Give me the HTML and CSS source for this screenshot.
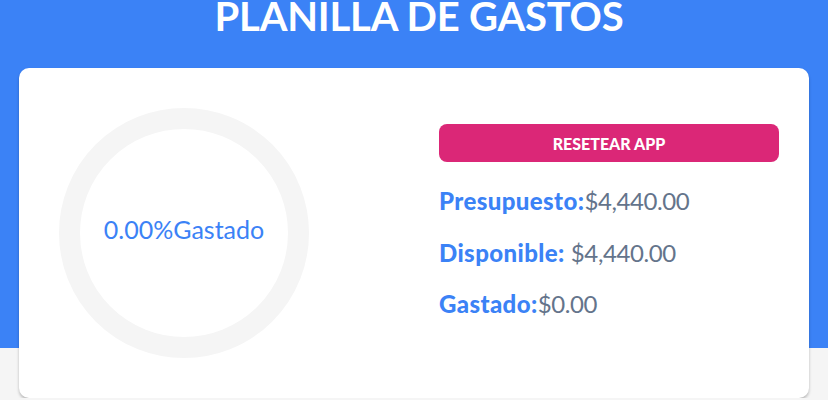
FILE: index.html
```html
<!DOCTYPE html>
<html lang="es">
<head>
<meta charset="utf-8">
<title>Planilla de gastos</title>
<link rel="stylesheet" href="styles.css">
</head>
<body>
<header class="header">
  <h1 class="title">Planilla de gastos</h1>
</header>
<main class="card">
  <div class="chart">
    <svg class="ring" viewBox="0 0 250 250" width="250" height="250">
      <circle cx="125" cy="125" r="114.5" fill="none" stroke="#f5f5f5" stroke-width="21"/>
    </svg>
    <p class="chart-text">0.00%Gastado</p>
  </div>
  <div class="info">
    <button class="reset" type="button">Resetear app</button>
    <p class="row"><span class="label">Presupuesto:</span><span class="value">$4,440.00</span></p>
    <p class="row"><span class="label">Disponible:</span> <span class="value">$4,440.00</span></p>
    <p class="row"><span class="label">Gastado:</span><span class="value">$0.00</span></p>
  </div>
</main>
</body>
</html>
```
FILE: styles.css
```css
* { box-sizing: border-box; }
html, body { margin: 0; padding: 0; }
body {
  background: #f5f5f5;
  font-family: Lato, "Open Sans", sans-serif;
  overflow: hidden;
}
.header {
  background: #3b82f6;
  height: 348px;
}
.title {
  margin: 0;
  padding-left: 10px;
  color: #fff;
  text-align: center;
  text-transform: uppercase;
  font-size: 40px;
  font-weight: 700;
  line-height: 32px;
  height: 28px;
  letter-spacing: -0.2px;
}
.card {
  margin: -280px 19px 0 19px;
  background: #fff;
  border-radius: 10px;
  box-shadow: 0 2px 3px rgba(0,0,0,0.25);
  padding: 40px 30px 40px 40px;
  display: grid;
  grid-template-columns: 1fr 1fr;
  column-gap: 40px;
  height: 330px;
}
.chart {
  position: relative;
  width: 250px;
  height: 250px;
}
.ring { display: block; }
.chart-text {
  position: absolute;
  inset: 0;
  margin: 0;
  padding-bottom: 8px;
  display: flex;
  align-items: center;
  justify-content: center;
  color: #3b82f6;
  font-size: 25px;
}
.info {
  padding-top: 16px;
  display: flex;
  flex-direction: column;
}
.reset {
  height: 38px;
  width: 100%;
  border: none;
  border-radius: 8px;
  background: #db2777;
  color: #fff;
  font-family: Lato, sans-serif;
  font-weight: 900;
  font-size: 16px;
  text-transform: uppercase;
  margin-bottom: 23px;
  padding: 0;
}
.row {
  margin: 0 0 19.5px 0;
  font-size: 24px;
  line-height: 32px;
  color: #64748b;
}
.value {
  letter-spacing: -0.4px;
}
.label {
  color: #3b82f6;
  font-weight: 900;
  letter-spacing: 0.4px;
}
```
